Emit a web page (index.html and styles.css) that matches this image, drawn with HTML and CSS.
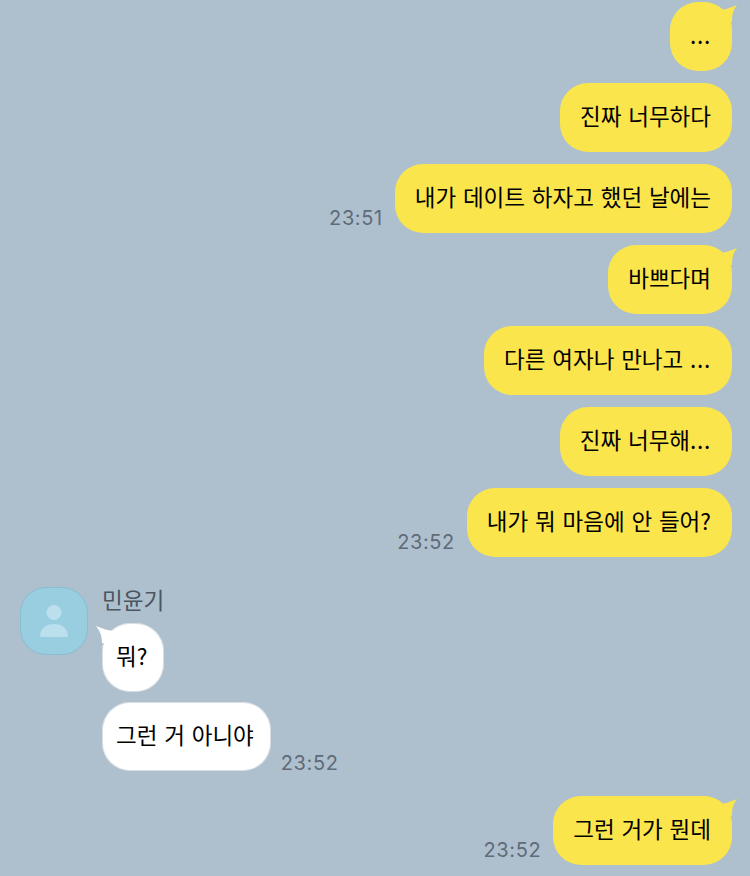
FILE: index.html
```html
<!DOCTYPE html>
<html lang="ko">
<head>
<meta charset="utf-8">
<title>채팅</title>
<link rel="stylesheet" href="styles.css">
</head>
<body>
<main class="chat">
  <div class="group mine first">
    <div class="row"><div class="bubble me tailed"><svg class="tail tail-me" viewBox="0 0 20 24"><path d="M0 8 C6 8 12 6 19 3 C15 8 14 13 14 20 L0 20 Z"/></svg><span class="dots">...</span></div></div>
    <div class="row"><div class="bubble me">진짜 너무하다</div></div>
    <div class="row"><span class="time">23:51</span><div class="bubble me">내가 데이트 하자고 했던 날에는</div></div>
    <div class="row"><div class="bubble me tailed"><svg class="tail tail-me" viewBox="0 0 20 24"><path d="M0 8 C6 8 12 6 19 3 C15 8 14 13 14 20 L0 20 Z"/></svg>바쁘다며</div></div>
    <div class="row"><div class="bubble me"><span>다른 여자나 만나고 <span class="dots">...</span></span></div></div>
    <div class="row"><div class="bubble me"><span>진짜 너무해<span class="dots">...</span></span></div></div>
    <div class="row"><span class="time">23:52</span><div class="bubble me">내가 뭐 마음에 안 들어?</div></div>
  </div>
  <div class="other">
    <div class="avatar">
      <svg class="person" viewBox="0 0 28 32"><circle cx="14" cy="7.5" r="7.5"/><path d="M0 32 C0 23 6 19 14 19 C22 19 28 23 28 32 Z"/></svg>
    </div>
    <div class="other-body">
      <div class="name">민윤기</div>
      <div class="row row-left"><div class="bubble you tailed"><svg class="tail tail-you" viewBox="0 0 20 24"><path d="M20 8 C14 8 7 6 0 3 C4 8 6 13 6 20 L20 20 Z"/></svg>뭐?</div></div>
      <div class="row row-left"><div class="bubble you">그런 거 아니야</div><span class="time">23:52</span></div>
    </div>
  </div>
  <div class="group mine last">
    <div class="row"><span class="time">23:52</span><div class="bubble me tailed"><svg class="tail tail-me" viewBox="0 0 20 24"><path d="M0 8 C6 8 12 6 19 3 C15 8 14 13 14 20 L0 20 Z"/></svg>그런 거가 뭔데</div></div>
  </div>
</main>
</body>
</html>
```
FILE: styles.css
```css
html, body { margin: 0; padding: 0; }
body {
  width: 750px;
  height: 876px;
  overflow: hidden;
  background: #aec0ce;
  font-family: "Noto Sans CJK KR", "Noto Sans", sans-serif;
  color: #000;
}
.chat { display: flex; flex-direction: column; padding-top: 2px; }
.group { display: flex; flex-direction: column; gap: 12px; padding-right: 18px; }
.row { display: flex; justify-content: flex-end; align-items: flex-end; gap: 12px; }
.row-left { justify-content: flex-start; gap: 10px; }
.bubble {
  position: relative;
  box-sizing: border-box;
  height: 69px;
  display: flex;
  align-items: center;
  padding-bottom: 5px;
  font-size: 22.5px;
  line-height: 30px;
  word-spacing: .5px;
  border-radius: 28px;
  white-space: nowrap;
}
.dots { letter-spacing: .7px; }
.me { background: #fae54d; padding-left: 20px; padding-right: 21px; }
.you { background: #fff; padding-left: 14px; padding-right: 17px; box-shadow: 0 0 0 1px rgba(130,150,165,.3) inset; }
.tail { position: absolute; top: 0; width: 20px; height: 24px; }
.tail-me { right: -6px; fill: #fae54d; }
.tail-you { left: -6px; fill: #fff; }
.time {
  font-family: Inter, "Liberation Sans", sans-serif;
  font-size: 20px;
  line-height: 24px;
  letter-spacing: .6px;
  color: #5f6b78;
  padding-bottom: 3px;
}
.row-left .time { padding-bottom: 0; margin-bottom: -4px; }
.other { display: flex; gap: 14px; padding: 30px 0 0 20px; }
.avatar {
  box-sizing: border-box;
  width: 68px;
  height: 68px;
  border-radius: 26px;
  background: #99cde0;
  border: 1px solid #88bdd2;
  display: flex;
  align-items: center;
  justify-content: center;
}
.person { width: 28px; height: 32px; fill: #bbdfec; }
.other-body { display: flex; flex-direction: column; gap: 10px; }
.name { font-size: 22.6px; line-height: 26px; height: 26px; color: #4b5661; }
.last { padding-top: 25px; }
```
